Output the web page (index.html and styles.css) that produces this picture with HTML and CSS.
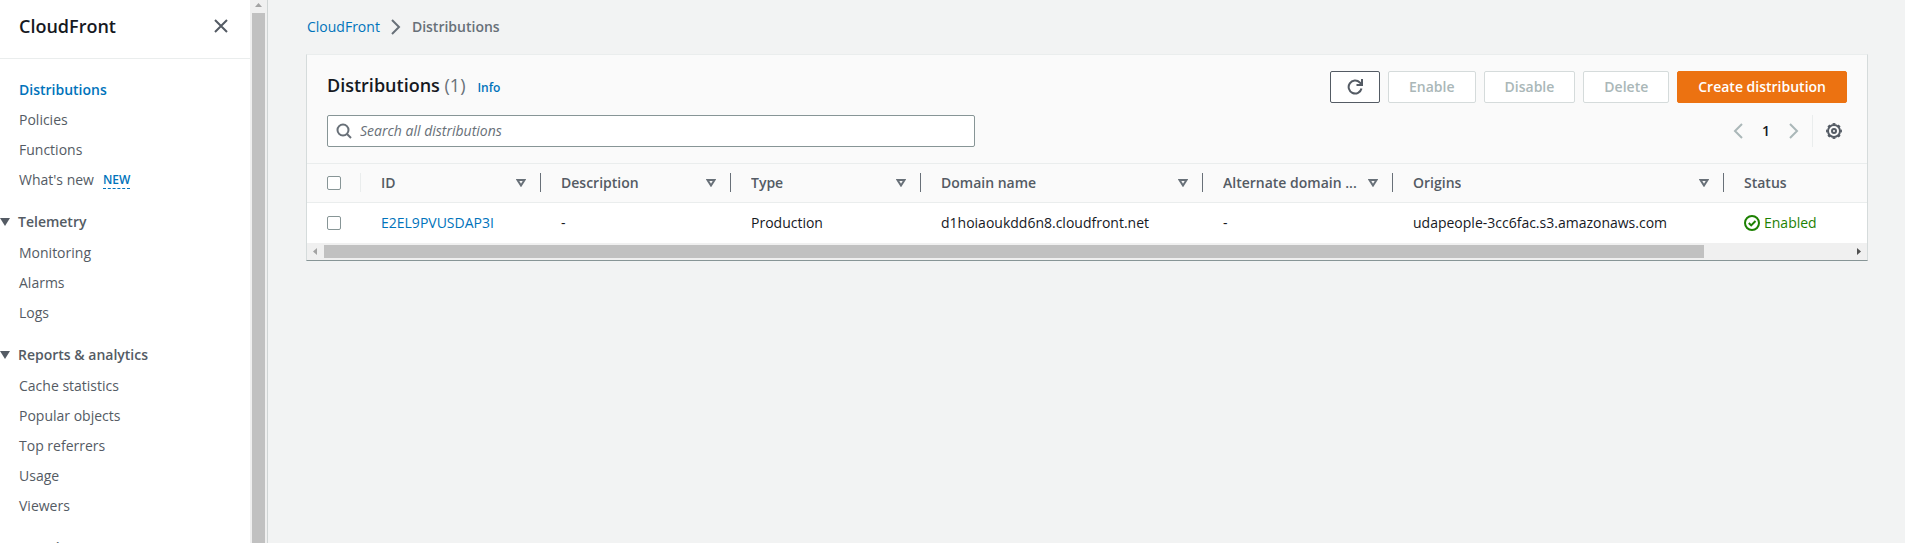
FILE: index.html
```html
<!DOCTYPE html>
<html lang="en">
<head>
<meta charset="utf-8">
<meta name="viewport" content="width=device-width, initial-scale=1">
<title>CloudFront - Distributions</title>
<link rel="stylesheet" href="styles.css">
</head>
<body>
<svg class="sprite" aria-hidden="true">
  <symbol id="chevron" viewBox="0 0 16 16"><path d="M4 1l7 7-7 7"/></symbol>
  <symbol id="sort" viewBox="0 0 10 8"><path d="M1.500 1h7L5 6.500z"/></symbol>
  <symbol id="caret" viewBox="0 0 10 8"><path d="M0 0h10L5 8z"/></symbol>
</svg>
<div class="app">
  <aside class="sidebar">
    <div class="panel">
      <header class="panel-head">
        <h2 class="panel-title">CloudFront</h2>
        <button class="icon-button" type="button" aria-label="Close navigation">
          <svg class="icon close" viewBox="0 0 16 16"><path d="M2 2l12 12M14 2L2 14"/></svg>
        </button>
      </header>
      <nav class="nav" aria-label="CloudFront">
        <ul class="links">
          <li><a class="link active" href="#">Distributions</a></li>
          <li><a class="link" href="#">Policies</a></li>
          <li><a class="link" href="#">Functions</a></li>
          <li><a class="link" href="#">What's new</a><a class="new" href="#">NEW</a></li>
        </ul>
        <button class="section" type="button"><svg class="caret"><use href="#caret"/></svg>Telemetry</button>
        <ul class="links">
          <li><a class="link" href="#">Monitoring</a></li>
          <li><a class="link" href="#">Alarms</a></li>
          <li><a class="link" href="#">Logs</a></li>
        </ul>
        <button class="section" type="button"><svg class="caret"><use href="#caret"/></svg>Reports &amp; analytics</button>
        <ul class="links">
          <li><a class="link" href="#">Cache statistics</a></li>
          <li><a class="link" href="#">Popular objects</a></li>
          <li><a class="link" href="#">Top referrers</a></li>
          <li><a class="link" href="#">Usage</a></li>
          <li><a class="link" href="#">Viewers</a></li>
        </ul>
        <button class="section" type="button"><svg class="caret"><use href="#caret"/></svg>Security</button>
      </nav>
    </div>
    <div class="vbar" aria-hidden="true">
      <svg class="vbar-arrow" viewBox="0 0 17 13"><path d="M5 7l3.500-4L12 7z"/></svg>
      <div class="vbar-thumb"></div>
    </div>
  </aside>

  <main class="main">
    <nav class="crumbs" aria-label="Breadcrumb">
      <a href="#">CloudFront</a>
      <svg class="icon crumb-sep"><use href="#chevron"/></svg>
      <span class="crumb-current">Distributions</span>
    </nav>

    <section class="card">
      <div class="card-head">
        <div class="row">
          <div class="heading">
            <h1 class="title">Distributions <span class="count">(1)</span></h1>
            <a class="info" href="#">Info</a>
          </div>
          <div class="actions">
            <button class="btn refresh" type="button" aria-label="Refresh">
              <svg class="icon" viewBox="0 0 16 16"><path d="M14.500 9.500A6.500 6.500 0 1 1 12.800 3.500L15 5.500M15 0v6H9.500"/></svg>
            </button>
            <button class="btn" type="button" disabled>Enable</button>
            <button class="btn" type="button" disabled>Disable</button>
            <button class="btn" type="button" disabled>Delete</button>
            <button class="btn primary" type="button">Create distribution</button>
          </div>
        </div>
        <div class="row">
          <label class="search">
            <svg class="icon" viewBox="0 0 16 16"><circle cx="7" cy="7" r="5.500"/><path d="M11 11l4 4"/></svg>
            <input type="search" placeholder="Search all distributions" aria-label="Search all distributions">
          </label>
          <div class="tools">
            <button class="icon-button page" type="button" aria-label="Previous page" disabled><svg class="icon flip"><use href="#chevron"/></svg></button>
            <button class="icon-button page-number" type="button">1</button>
            <button class="icon-button page" type="button" aria-label="Next page" disabled><svg class="icon"><use href="#chevron"/></svg></button>
            <div class="prefs">
              <button class="icon-button" type="button" aria-label="Preferences">
                <svg class="icon" viewBox="0 0 16 16"><circle cx="8" cy="8" r="6"/><circle class="teeth" cx="8" cy="8" r="7.200" pathLength="16"/><circle cx="8" cy="8" r="2"/></svg>
              </button>
            </div>
          </div>
        </div>
      </div>

      <div class="table-wrap">
        <table class="table">
          <colgroup>
            <col class="c-select"><col class="c-id"><col class="c-std"><col class="c-std"><col class="c-domain"><col class="c-std"><col class="c-origins"><col class="c-status">
          </colgroup>
          <thead>
            <tr>
              <th scope="col" class="pick"><div class="th light"><input type="checkbox" aria-label="Select all"></div></th>
              <th scope="col"><div class="th"><span>ID</span><svg class="sort"><use href="#sort"/></svg></div></th>
              <th scope="col"><div class="th"><span>Description</span><svg class="sort"><use href="#sort"/></svg></div></th>
              <th scope="col"><div class="th"><span>Type</span><svg class="sort"><use href="#sort"/></svg></div></th>
              <th scope="col"><div class="th"><span>Domain name</span><svg class="sort"><use href="#sort"/></svg></div></th>
              <th scope="col"><div class="th"><span>Alternate domain ...</span><svg class="sort"><use href="#sort"/></svg></div></th>
              <th scope="col"><div class="th"><span>Origins</span><svg class="sort"><use href="#sort"/></svg></div></th>
              <th scope="col"><div class="th last"><span>Status</span></div></th>
            </tr>
          </thead>
          <tbody>
            <tr>
              <td class="pick"><input type="checkbox" aria-label="Select E2EL9PVUSDAP3I"></td>
              <td><a href="#">E2EL9PVUSDAP3I</a></td>
              <td>-</td>
              <td>Production</td>
              <td>d1hoiaoukdd6n8.cloudfront.net</td>
              <td>-</td>
              <td>udapeople-3cc6fac.s3.amazonaws.com</td>
              <td><span class="status"><svg class="icon" viewBox="0 0 16 16"><circle cx="8" cy="8" r="7"/><path d="M4.800 8l2.400 2.400L11.500 6"/></svg>Enabled</span></td>
            </tr>
          </tbody>
        </table>
      </div>
      <div class="hbar" aria-hidden="true">
        <svg class="hbar-arrow off" viewBox="0 0 17 17"><path d="M10 5v7L6 8.500z"/></svg>
        <div class="hbar-track"><div class="hbar-thumb"></div></div>
        <svg class="hbar-arrow" viewBox="0 0 17 17"><path d="M7 5v7l4-3.500z"/></svg>
      </div>
    </section>
  </main>
</div>
</body>
</html>
```
FILE: styles.css
```css
* { box-sizing: border-box; }

body {
  margin: 0;
  background: #f2f3f3;
  color: #16191f;
  font: 14px/20px "Open Sans", "Noto Sans", sans-serif;
}

a { color: #0073bb; text-decoration: none; }
button, input { font: inherit; }
button { cursor: pointer; }
button:disabled { cursor: default; }
h1, h2, ul { margin: 0; padding: 0; }
ul { list-style: none; }
.sprite { position: absolute; width: 0; height: 0; }

.icon {
  width: 16px;
  height: 16px;
  flex: none;
  display: block;
  fill: none;
  stroke: currentColor;
  stroke-width: 2;
}

.icon-button {
  display: flex;
  align-items: center;
  justify-content: center;
  padding: 0;
  border: 0;
  background: none;
  color: #545b64;
}

.app { display: flex; height: 100vh; overflow: hidden; }

/* Sidebar */
.sidebar {
  display: flex;
  flex: none;
  width: 268px;
  background: #fff;
  border-right: 1px solid #d0d5d5;
}
.panel { flex: 1; overflow: hidden; }
.panel-head {
  display: flex;
  align-items: center;
  justify-content: space-between;
  height: 59px;
  padding: 0 21px 6px 19px;
  border-bottom: 1px solid #eaeded;
}
.panel-title { font-size: 18px; line-height: 22px; font-weight: 600; }
.nav { padding-top: 16px; }
.links { padding-left: 19px; }
.links li { display: flex; align-items: center; height: 30px; }
.link { color: #545b64; }
.link.active { color: #0073bb; font-weight: 600; }
.new {
  margin-left: 9px;
  font-size: 12px;
  line-height: 16px;
  font-weight: 600;
  border-bottom: 1px dashed #0073bb;
}
.section {
  display: flex;
  align-items: center;
  gap: 8px;
  margin-top: 12px;
  padding: 5px 0 6px;
  border: 0;
  background: none;
  color: #545b64;
  font-weight: 600;
}
.caret { width: 10px; height: 8px; fill: #545b64; }

.vbar { display: flex; flex-direction: column; width: 17px; background: #f0f0f0; }
.vbar-arrow { height: 13px; fill: #a3a3a3; flex: none; }
.vbar-thumb { flex: 1; margin: 0 2px; background: #c1c1c1; }

/* Main */
.main { flex: 1; min-width: 0; padding: 17px 37px 0 38px; }
.crumbs { display: flex; align-items: center; gap: 8px; margin-bottom: 17px; padding-left: 1px; }
.crumb-sep { color: #687078; }
.crumb-current { color: #687078; font-weight: 600; }

.card {
  background: #fff;
  border: 1px solid #d5dbdb;
  border-top-color: #eaeded;
  border-bottom-color: #879596;
}
.card-head {
  display: flex;
  flex-direction: column;
  gap: 12px;
  padding: 16px 20px;
  background: #fafafa;
}
.row { display: flex; align-items: center; justify-content: space-between; gap: 20px; }
.heading { display: flex; align-items: baseline; gap: 12px; padding-bottom: 2px; }
.title { font-size: 18px; line-height: 22px; font-weight: 600; }
.count { color: #687078; font-weight: 400; }
.info { font-size: 12px; font-weight: 600; }

.actions { display: flex; gap: 8px; }
.btn {
  height: 32px;
  padding: 0 20px;
  border: 1px solid #545b64;
  border-radius: 2px;
  background: #fff;
  color: #545b64;
  font-weight: 600;
}
.btn:disabled { border-color: #d5dbdb; color: #aab7b8; }
.refresh { padding: 0 16px; }
.btn.primary { border-color: #ec7211; background: #ec7211; color: #fff; }

.search {
  display: flex;
  align-items: center;
  gap: 8px;
  flex: 0 1 648px;
  height: 32px;
  padding: 0 8px;
  border: 1px solid #879596;
  border-radius: 2px;
  background: #fff;
  color: #687078;
}
.search input { flex: 1; min-width: 0; padding: 0; border: 0; outline: 0; background: none; }
.search input::placeholder { color: #687078; font-style: italic; opacity: 1; }

.tools { display: flex; align-items: center; gap: 10px; }
.page { color: #aab7b8; }
.page-number { width: 20px; color: #16191f; font-weight: 600; }
.flip { transform: scaleX(-1); }
.prefs {
  display: flex;
  align-items: center;
  height: 32px;
  padding: 0 5px 0 13px;
  border-left: 1px solid #eaeded;
}
.teeth { stroke-width: 1.5; stroke-dasharray: 1; stroke-dashoffset: 0.5; }

/* Table */
.table-wrap { overflow: hidden; }
.table { width: 1726px; table-layout: fixed; border-collapse: collapse; }
.c-select { width: 54px; }
.c-id { width: 180px; }
.c-std { width: 190px; }
.c-domain { width: 282px; }
.c-origins { width: 331px; }
.table th {
  padding: 9px 0 10px;
  border-top: 1px solid #eaeded;
  border-bottom: 1px solid #eaeded;
  background: #fafafa;
  color: #545b64;
  font-weight: 600;
  text-align: left;
}
.th {
  display: flex;
  align-items: center;
  justify-content: space-between;
  gap: 10px;
  height: 19px;
  padding: 0 14px 0 20px;
  border-right: 1px solid #687078;
}
.th span { overflow: hidden; text-overflow: ellipsis; white-space: nowrap; }
.light { border-color: #eaeded; }
.last { border: 0; }
.sort { width: 10px; height: 8px; flex: none; fill: none; stroke: #687078; stroke-width: 2; }
.table td { height: 40px; padding: 0 20px; white-space: nowrap; }
.table input {
  appearance: none;
  display: block;
  width: 14px;
  height: 14px;
  margin: 0;
  border: 1px solid #879596;
  border-radius: 2px;
  background: #fff;
}
.status { display: flex; align-items: center; gap: 4px; color: #1d8102; }

.hbar { display: flex; height: 17px; background: #f0f0f0; }
.hbar-arrow { width: 17px; height: 17px; flex: none; fill: #505050; }
.off { fill: #a3a3a3; }
.hbar-track { flex: 1; padding: 2px 0; }
.hbar-thumb { width: 90.400%; height: 13px; background: #c1c1c1; }
```
